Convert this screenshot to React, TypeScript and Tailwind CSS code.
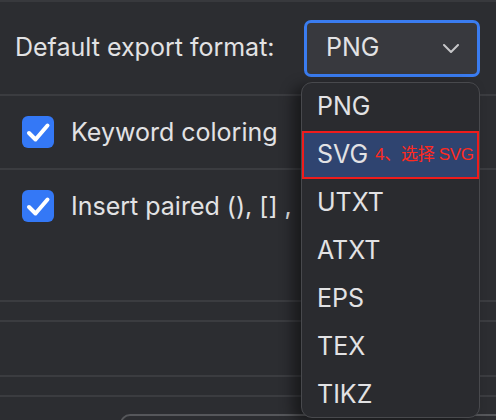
import type { ReactNode } from "react";

const formats = ["PNG", "SVG", "UTXT", "ATXT", "EPS", "TEX", "TIKZ"];

function Divider() {
  return <div className="h-[2px] w-full bg-[#3b3c40]" />;
}

function Checkbox() {
  return (
    <div className="flex h-8 w-8 shrink-0 items-center justify-center rounded-[6px] bg-[#3478f6]">
      <svg width="32" height="32" viewBox="0 0 32 32" fill="none">
        <path d="M7 17l6.5 6.5L25.5 9.5" stroke="white" strokeWidth="4" strokeLinecap="round" strokeLinejoin="round" />
      </svg>
    </div>
  );
}

function CheckRow({ children }: { children: ReactNode }) {
  return (
    <div className="flex items-start gap-[17px] pl-[22px]">
      <Checkbox />
      <span className="max-w-[224px] overflow-hidden whitespace-nowrap leading-8">{children}</span>
    </div>
  );
}

export default function App() {
  return (
    <div
      className="relative h-[420px] w-[496px] overflow-hidden bg-[#2c2d31] text-[25px] text-[#e2e2e4]"
      style={{ fontFamily: "Inter, 'Noto Sans CJK SC', sans-serif" }}
    >
      <div className="h-[2px] w-full bg-[#38393d]" />

      <div className="flex h-[92px] items-center pl-[15px]">
        <span className="w-[289px]">Default export format:</span>
        <div className="flex h-[57px] w-[176px] items-center justify-between rounded-[7px] border-[3px] border-[#3a7cf0] bg-[#38393e] pl-[19px] pr-[18px]">
          <span>PNG</span>
          <svg width="16" height="9" viewBox="0 0 16 9" fill="none">
            <path d="M1 1l7 7 7-7" stroke="#c6c6c8" strokeWidth="2" strokeLinecap="round" strokeLinejoin="round" />
          </svg>
        </div>
      </div>

      <Divider />
      <div className="flex h-[72px] items-center">
        <CheckRow>Keyword coloring</CheckRow>
      </div>
      <Divider />
      <div className="h-[130px] pt-5">
        <CheckRow>Insert paired (), [] , {"{}"}</CheckRow>
      </div>
      <Divider />
      <div className="h-[18px]" />
      <Divider />
      <div className="h-[53px]" />
      <Divider />
      <div className="h-[18px]" />
      <Divider />
      <div className="ml-[120px] mt-[17px] h-10 rounded-tl-[10px] border-l-2 border-t-2 border-[#56575b]" />

      {/* dropdown menu */}
      <div className="absolute left-[301px] top-[82px] h-[336px] w-[179px] overflow-hidden rounded-[11px] border border-[#48494d] bg-[#2a2b2f] shadow-[-8px_4px_14px_rgba(0,0,0,0.45)]">
        {formats.map((f) => (
          <div
            key={f}
            className={
              "flex h-12 items-center whitespace-nowrap pl-[15px] " +
              (f === "SVG" ? "bg-[#2f4470] outline outline-2 -outline-offset-2 outline-[#ee1c1c]" : "")
            }
          >
            <span>{f}</span>
            {f === "SVG" && (
              <span
                className="ml-[7px] text-[17px] tracking-[-0.3px] text-[#ff2a1f]"
                style={{ fontFamily: "'Liberation Sans', 'Noto Sans CJK SC', sans-serif" }}
              >
                4、选择 SVG
              </span>
            )}
          </div>
        ))}
      </div>
    </div>
  );
}
